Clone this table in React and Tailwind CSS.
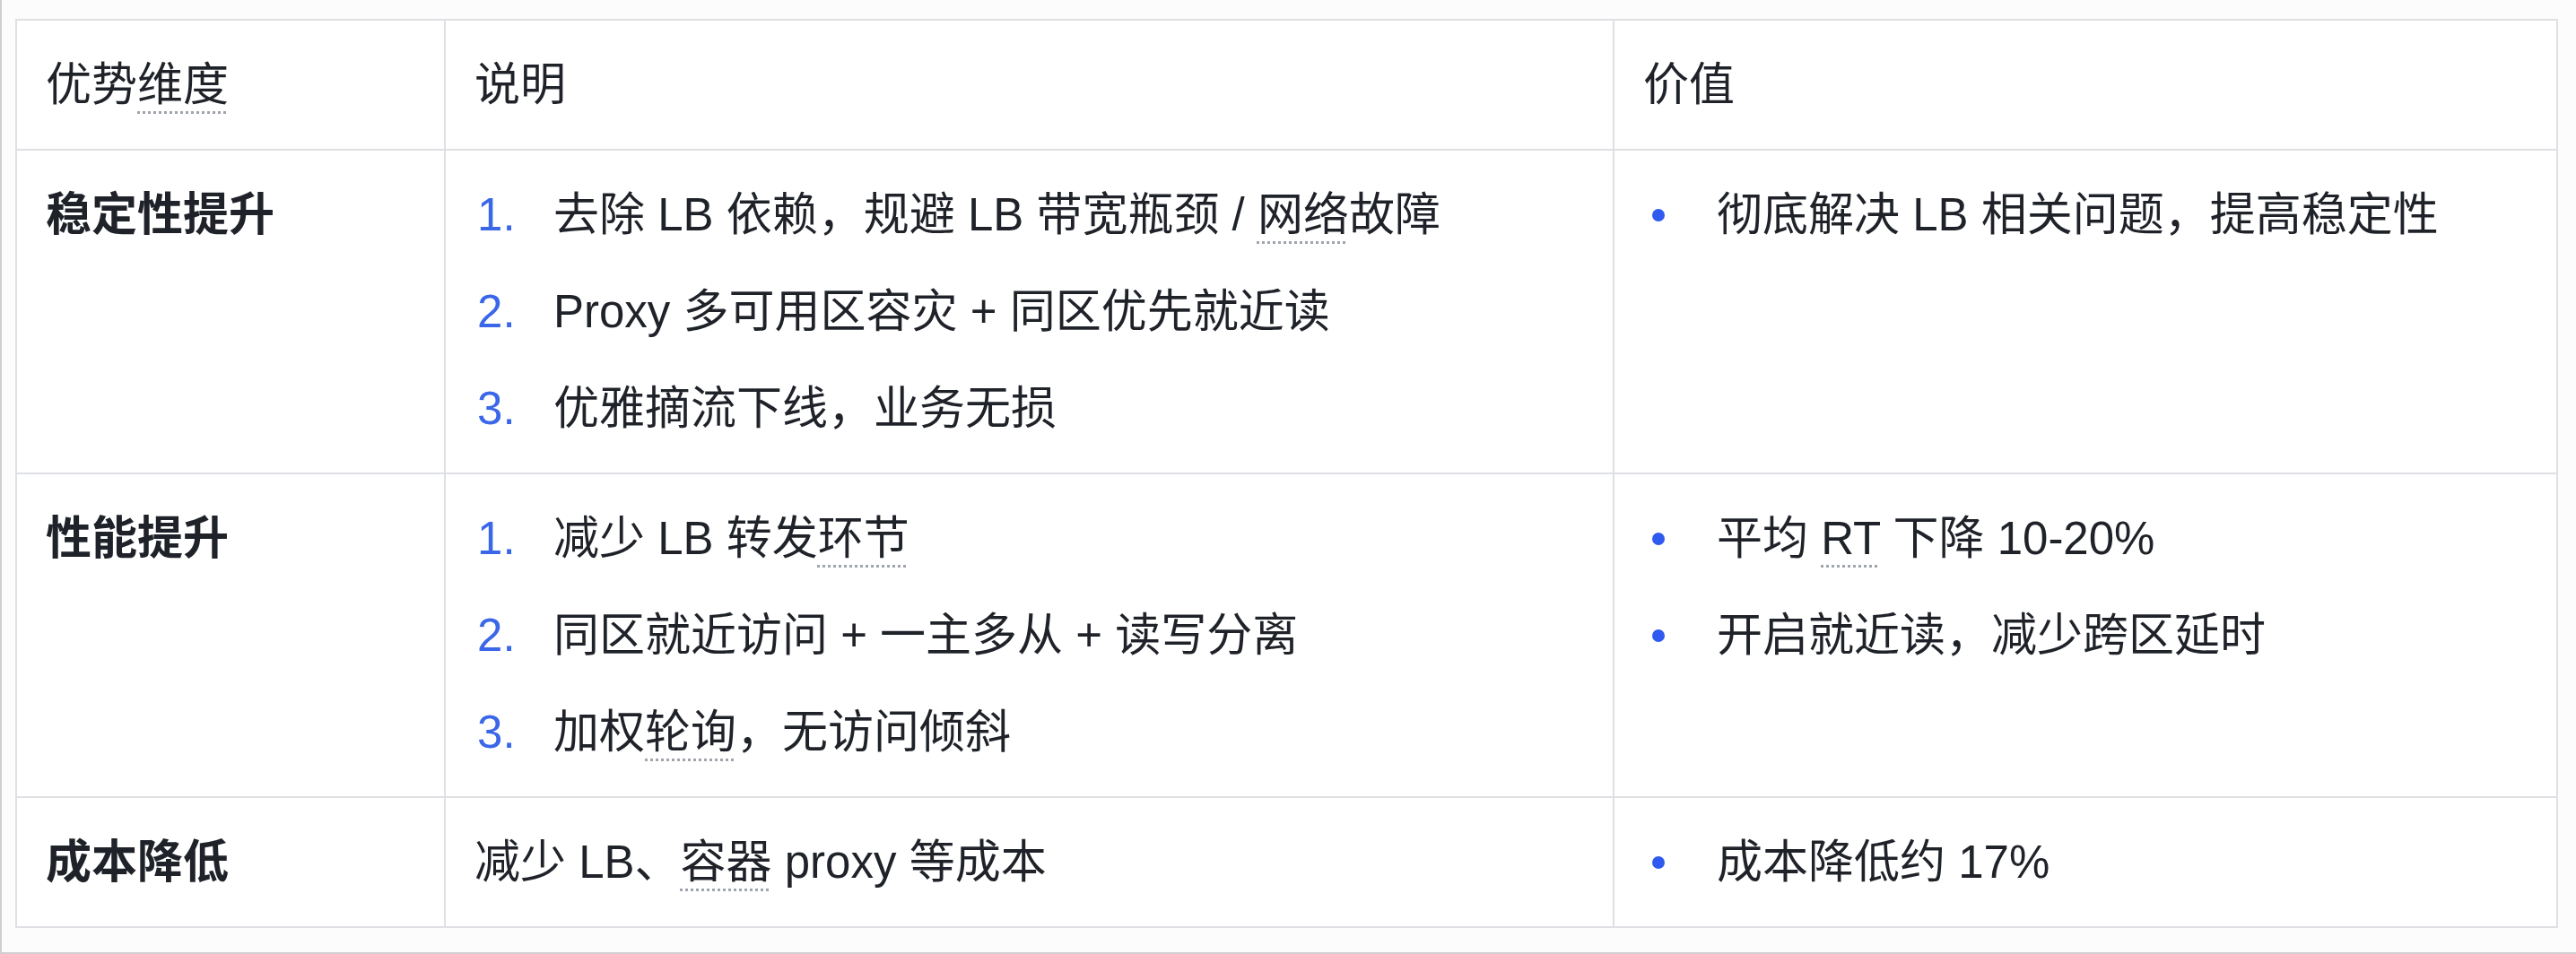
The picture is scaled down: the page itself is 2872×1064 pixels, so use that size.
import React from 'react';

const rows = [
  {
    label: '稳定性提升',
    desc: [
      <>去除 LB 依赖，规避 LB 带宽瓶颈 / <Term>网络</Term>故障</>,
      <>Proxy 多可用区容灾 + 同区优先就近读</>,
      <>优雅摘流下线，业务无损</>,
    ],
    value: [<>彻底解决 LB 相关问题，提高稳定性</>],
  },
  {
    label: '性能提升',
    desc: [
      <>减少 LB 转发<Term>环节</Term></>,
      <>同区就近访问 + 一主多从 + 读写分离</>,
      <>加权<Term>轮询</Term>，无访问倾斜</>,
    ],
    value: [<>平均 <Term>RT</Term> 下降 10-20%</>, <>开启就近读，减少跨区延时</>],
  },
  {
    label: '成本降低',
    plain: <>减少 LB、<Term>容器</Term> proxy 等成本</>,
    value: [<>成本降低约 17%</>],
  },
];

function Term({ children }) {
  return (
    <span className="underline decoration-dotted decoration-[#a0a5ad] decoration-[3px] underline-offset-[12px]">
      {children}
    </span>
  );
}

const OrderedList = ({ items }) => (
  <div className="flex flex-col gap-[29px] pl-[3px]">
    {items.map((item, i) => (
      <div key={i} className="flex">
        <span className="w-[85px] shrink-0 text-[#3a66e8]">{i + 1}.</span>
        <span>{item}</span>
      </div>
    ))}
  </div>
);

const BulletList = ({ items }) => (
  <div className="flex flex-col gap-[29px]">
    {items.map((item, i) => (
      <div key={i} className="flex items-center">
        <span className="ml-[10px] mr-[58px] h-[14px] w-[14px] shrink-0 rounded-full bg-[#2f5af0]" />
        <span>{item}</span>
      </div>
    ))}
  </div>
);

export default function App() {
  return (
    <div
      className="h-[1064px] w-full border-b-2 border-l-2 border-[#cfcfcf] bg-[#fcfcfc] pl-[15px] pt-[21px] text-[51px] leading-[79px] text-[#1f2329]"
      style={{ fontFamily: '"Liberation Sans", "Noto Sans CJK SC", sans-serif' }}
    >
      <table className="table-fixed border-collapse bg-white">
        <colgroup>
          <col className="w-[478px]" />
          <col className="w-[1303px]" />
          <col className="w-[1052px]" />
        </colgroup>
        <thead>
          <tr>
            <th className="border-2 border-[#dee0e3] px-[32px] py-[32px] text-left align-top font-normal">
              优势<Term>维度</Term>
            </th>
            <th className="border-2 border-[#dee0e3] px-[32px] py-[32px] text-left align-top font-normal">说明</th>
            <th className="border-2 border-[#dee0e3] px-[32px] py-[32px] text-left align-top font-normal">价值</th>
          </tr>
        </thead>
        <tbody>
          {rows.map((row) => (
            <tr key={row.label}>
              <td className="border-2 border-[#dee0e3] px-[32px] py-[32px] align-top font-bold">{row.label}</td>
              <td className="border-2 border-[#dee0e3] px-[32px] py-[32px] align-top">
                {row.plain ? row.plain : <OrderedList items={row.desc} />}
              </td>
              <td className="border-2 border-[#dee0e3] px-[32px] py-[32px] align-top">
                <BulletList items={row.value} />
              </td>
            </tr>
          ))}
        </tbody>
      </table>
    </div>
  );
}
